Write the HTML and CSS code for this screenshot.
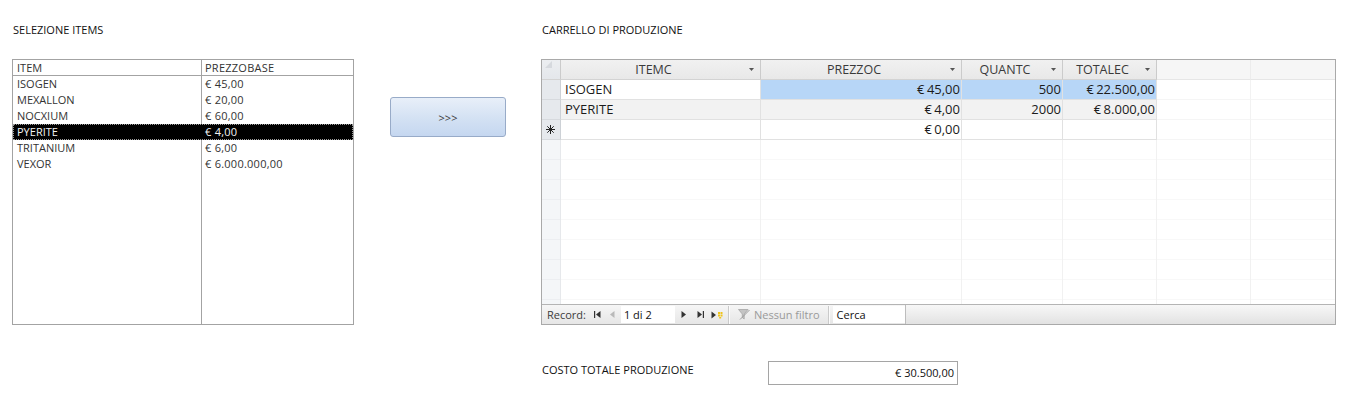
FILE: index.html
```html
<!DOCTYPE html>
<html lang="it">
<head>
<meta charset="utf-8">
<title>Carrello di produzione</title>
<link rel="stylesheet" href="styles.css">
</head>
<body>
<div class="page">
  <section class="left">
    <h2 class="title">SELEZIONE ITEMS</h2>
    <div class="listbox">
      <div class="lb-row lb-head"><span>ITEM</span><span>PREZZOBASE</span></div>
      <div class="lb-row"><span>ISOGEN</span><span>€ 45,00</span></div>
      <div class="lb-row"><span>MEXALLON</span><span>€ 20,00</span></div>
      <div class="lb-row"><span>NOCXIUM</span><span>€ 60,00</span></div>
      <div class="lb-row sel"><span>PYERITE</span><span>€ 4,00</span></div>
      <div class="lb-row"><span>TRITANIUM</span><span>€ 6,00</span></div>
      <div class="lb-row"><span>VEXOR</span><span>€ 6.000.000,00</span></div>
    </div>
  </section>

  <div class="mid">
    <button class="move" type="button">&gt;&gt;&gt;</button>
  </div>

  <section class="right">
    <h2 class="title">CARRELLO DI PRODUZIONE</h2>
    <div class="sheet">
      <div class="sh-row sh-head">
        <div class="hc corner"><svg width="8" height="8" viewBox="0 0 8 8"><polygon points="8,0 8,7 1,7" fill="#d6d9de"/></svg></div>
        <div class="hc"><span></span><span class="ht">ITEMC</span><span class="arr"><svg width="5" height="3" viewBox="0 0 5 3"><polygon points="0,0 5,0 2.5,3" fill="#555"/></svg></span></div>
        <div class="hc"><span></span><span class="ht">PREZZOC</span><span class="arr"><svg width="5" height="3" viewBox="0 0 5 3"><polygon points="0,0 5,0 2.5,3" fill="#555"/></svg></span></div>
        <div class="hc"><span></span><span class="ht">QUANTC</span><span class="arr"><svg width="5" height="3" viewBox="0 0 5 3"><polygon points="0,0 5,0 2.5,3" fill="#555"/></svg></span></div>
        <div class="hc"><span></span><span class="ht">TOTALEC</span><span class="arr"><svg width="5" height="3" viewBox="0 0 5 3"><polygon points="0,0 5,0 2.5,3" fill="#555"/></svg></span></div>
        <div class="hc blank"></div>
        <div class="hc blank last"></div>
      </div>

      <div class="sh-row">
        <div class="rs"></div>
        <div class="dc">ISOGEN</div>
        <div class="dc num hl">€ 45,00</div>
        <div class="dc num hl">500</div>
        <div class="dc num hl">€ 22.500,00</div>
        <div class="ec"></div>
        <div class="ec last"></div>
      </div>
      <div class="sh-row alt">
        <div class="rs"></div>
        <div class="dc">PYERITE</div>
        <div class="dc num">€ 4,00</div>
        <div class="dc num">2000</div>
        <div class="dc num">€ 8.000,00</div>
        <div class="ec"></div>
        <div class="ec last"></div>
      </div>
      <div class="sh-row">
        <div class="rs newrow"><svg width="9" height="9" viewBox="0 0 9 9"><g stroke="#222" stroke-width="1"><line x1="4.5" y1="0" x2="4.5" y2="9"/><line x1="0" y1="4.5" x2="9" y2="4.5"/><line x1="1.3" y1="1.3" x2="7.7" y2="7.7"/><line x1="7.7" y1="1.3" x2="1.3" y2="7.7"/></g></svg></div>
        <div class="dc"></div>
        <div class="dc num">€ 0,00</div>
        <div class="dc num"></div>
        <div class="dc num"></div>
        <div class="ec"></div>
        <div class="ec last"></div>
      </div>

      <div class="sh-row filler">
        <div class="rs-empty"></div>
        <div class="fc"></div>
        <div class="fc"></div>
        <div class="fc"></div>
        <div class="fc"></div>
        <div class="fc"></div>
        <div class="fc last"></div>
      </div>

      <div class="nav">
        <span class="rec">Record:</span>
        <span class="nb first"><svg width="7" height="7" viewBox="0 0 7 7"><rect x="0" y="0" width="1.2" height="7" fill="#333"/><polygon points="6.5,0 2,3.5 6.5,7" fill="#333"/></svg></span>
        <span class="nb prev"><svg width="5" height="7" viewBox="0 0 5 7"><polygon points="4.5,0 0,3.5 4.5,7" fill="#b9b9b9"/></svg></span>
        <span class="pos">1 di 2</span>
        <span class="nb next"><svg width="5" height="7" viewBox="0 0 5 7"><polygon points="0.5,0 5,3.5 0.5,7" fill="#333"/></svg></span>
        <span class="nb lastb"><svg width="7" height="7" viewBox="0 0 7 7"><polygon points="0.5,0 5,3.5 0.5,7" fill="#333"/><rect x="5.8" y="0" width="1.2" height="7" fill="#333"/></svg></span>
        <span class="nb newb"><svg width="12" height="8" viewBox="0 0 12 8"><polygon points="0.5,0.5 5,4 0.5,7.5" fill="#333"/><g fill="#f0c419"><rect x="7" y="1" width="2" height="2"/><rect x="9.5" y="1" width="2" height="2"/><rect x="7" y="3.5" width="2" height="2"/><rect x="9.5" y="3.5" width="2" height="2"/><rect x="8.2" y="6" width="2" height="1.5"/></g></svg></span>
        <span class="sep"></span>
        <span class="filt"><svg width="12" height="11" viewBox="0 0 12 11"><polygon points="0.5,0.5 10,0.5 6.2,5 6.2,10 4.3,8.5 4.3,5" fill="#c4c4c4" stroke="#a6a6a6" stroke-width="0.8"/><line x1="2" y1="10.5" x2="11.5" y2="1" stroke="#9a9a9a" stroke-width="1"/></svg></span>
        <span class="nofilter">Nessun filtro</span>
        <span class="sep"></span>
        <span class="search">Cerca</span>
        <span class="hscroll"></span>
      </div>
    </div>

    <div class="total">
      <span class="total-label">COSTO TOTALE PRODUZIONE</span>
      <span class="total-box">€ 30.500,00</span>
    </div>
  </section>
</div>
</body>
</html>
```

FILE: styles.css
```css
* {
  box-sizing: border-box;
}

body {
  margin: 0;
  background: #ffffff;
  font-family: "Open Sans", "Noto Sans", sans-serif;
  color: #1a1a1a;
}

.page {
  display: flex;
  align-items: flex-start;
  padding: 22px 0 0 12px;
}

.title {
  margin: 0 0 22px;
  padding-left: 1px;
  height: 15px;
  font-size: 11px;
  line-height: 15px;
  font-weight: 400;
  color: #111;
  white-space: nowrap;
}

/* ---------- left list ---------- */
.left {
  width: 342px;
  flex: none;
}

.listbox {
  height: 266px;
  border: 1px solid #a3a3a3;
  background: linear-gradient(to right, transparent 188px, #a3a3a3 188px, #a3a3a3 189px, transparent 189px);
  font-size: 11px;
  color: #333;
}

.lb-row {
  display: grid;
  grid-template-columns: 188px 1fr;
  height: 16px;
  line-height: 16px;
}

.lb-row span {
  padding-left: 4px;
  white-space: nowrap;
}

.lb-row span + span {
  letter-spacing: 0.25px;
}

.lb-head {
  border-bottom: 1px solid #a3a3a3;
  line-height: 15px;
}

.lb-row.sel {
  background: #000;
  color: #f4f4f4;
  outline: 1px dotted #9a9a9a;
  outline-offset: -1px;
}

/* ---------- button ---------- */
.mid {
  flex: none;
  margin-left: 36px;
  padding-top: 75px;
}

.move {
  display: block;
  width: 116px;
  height: 40px;
  border: 1px solid #98abc8;
  border-radius: 3px;
  background: linear-gradient(#e8eff9, #d3e1f3 55%, #c5d7f0);
  font-family: "Open Sans", "Noto Sans", sans-serif;
  font-size: 11px;
  color: #3a3a3a;
  padding: 0;
}

/* ---------- datasheet ---------- */
.right {
  flex: none;
  width: 795px;
  margin-left: 35px;
}

.sheet {
  height: 266px;
  border: 1px solid #a9a9a9;
  display: flex;
  flex-direction: column;
  overflow: hidden;
}

.sh-row {
  display: grid;
  grid-template-columns: 19px 200px 201px 101px 94px 94px 1fr;
  height: 20px;
  flex: none;
}

.sh-head .hc {
  display: grid;
  grid-template-columns: 4px 1fr 18px;
  align-items: center;
  background: linear-gradient(#f1f1f1, #e8e8e8);
  border-right: 1px solid #cbcbcb;
  border-bottom: 1px solid #d3d3d3;
  font-size: 12.5px;
  color: #3a3a3a;
  line-height: 19px;
}

.sh-head .ht {
  text-align: center;
  white-space: nowrap;
}

.sh-head .arr {
  display: flex;
  justify-content: center;
  align-items: center;
}

.sh-head .arr svg {
  display: block;
}

.sh-head .corner {
  display: flex;
  align-items: flex-start;
  justify-content: flex-start;
  padding: 1px 0 0 2px;
  background: linear-gradient(#eceef1, #e4e7eb);
}

.sh-head .blank {
  background: #f6f6f6;
  border-right: 1px solid #ececec;
  border-bottom: 1px solid #e6e6e6;
}

.sh-head .last,
.sh-row .last {
  border-right: none;
}

.rs {
  background: #e6e9ed;
  border-right: 1px solid #cdd1d6;
  border-bottom: 1px solid #d7dade;
}

.rs.newrow {
  display: flex;
  align-items: center;
  justify-content: center;
  padding-right: 1px;
}

.dc {
  border-right: 1px solid #e1e1e1;
  border-bottom: 1px solid #e1e1e1;
  padding: 0 4px;
  font-size: 13px;
  line-height: 19px;
  color: #1c1c1c;
  white-space: nowrap;
  overflow: hidden;
}

.dc.num {
  text-align: right;
  padding-right: 1px;
  word-spacing: -1px;
}

.dc.hl {
  background: #b7d6f7;
}

.sh-row.alt .dc {
  background: #f2f2f2;
}

.ec {
  border-right: 1px solid #f2f2f2;
  border-bottom: 1px solid #f5f5f5;
}

.filler {
  flex: 1;
  height: auto;
}

.rs-empty {
  background: #f4f6f8 repeating-linear-gradient(to bottom, transparent 0 19px, #eceef1 19px 20px);
  border-right: 1px solid #e6e8eb;
}

.fc {
  border-right: 1px solid #f1f1f1;
  background: repeating-linear-gradient(to bottom, transparent 0 19px, #f8f8f8 19px 20px);
}

/* ---------- navigation bar ---------- */
.nav {
  flex: none;
  height: 20px;
  display: flex;
  align-items: center;
  border-top: 1px solid #b4b4b4;
  background: linear-gradient(#f6f6f6, #e6e6e6);
  font-size: 11px;
  color: #3c3c3c;
  white-space: nowrap;
}

.rec {
  padding-left: 5px;
  margin-right: 8px;
}

.nb {
  display: flex;
  align-items: center;
}

.nb svg {
  display: block;
}

.first {
  margin-right: 9px;
}

.prev {
  margin-right: 6px;
}

.pos {
  width: 54px;
  height: 17px;
  line-height: 17px;
  background: #fff;
  padding-left: 3px;
  color: #111;
  margin-right: 6px;
}

.next {
  margin-right: 11px;
}

.lastb {
  margin-right: 7px;
}

.newb {
  margin-right: 5px;
}

.sep {
  width: 1px;
  height: 18px;
  background: #cacaca;
  box-shadow: 1px 0 0 #fbfbfb;
}

.filt {
  display: flex;
  align-items: center;
  margin: 0 4px 0 9px;
}

.filt svg {
  display: block;
}

.nofilter {
  color: #9a9a9a;
  margin-right: 8px;
}

.search {
  width: 72px;
  height: 17px;
  line-height: 17px;
  background: #fff;
  padding-left: 4px;
  margin-left: 4px;
  color: #111;
}

.hscroll {
  flex: 1;
  align-self: stretch;
  border-left: 1px solid #bdbdbd;
  background: linear-gradient(#f7f7f7, #eeeeee 45%, #e2e2e2);
}

/* ---------- total ---------- */
.total {
  display: flex;
  align-items: flex-start;
  margin-top: 36px;
  font-size: 11px;
}

.total-label {
  width: 227px;
  padding-left: 1px;
  padding-top: 1px;
  line-height: 15px;
  color: #111;
}

.total-box {
  width: 190px;
  height: 24px;
  border: 1px solid #a5a5a5;
  text-align: right;
  padding-right: 3px;
  line-height: 21px;
  color: #111;
}
```
